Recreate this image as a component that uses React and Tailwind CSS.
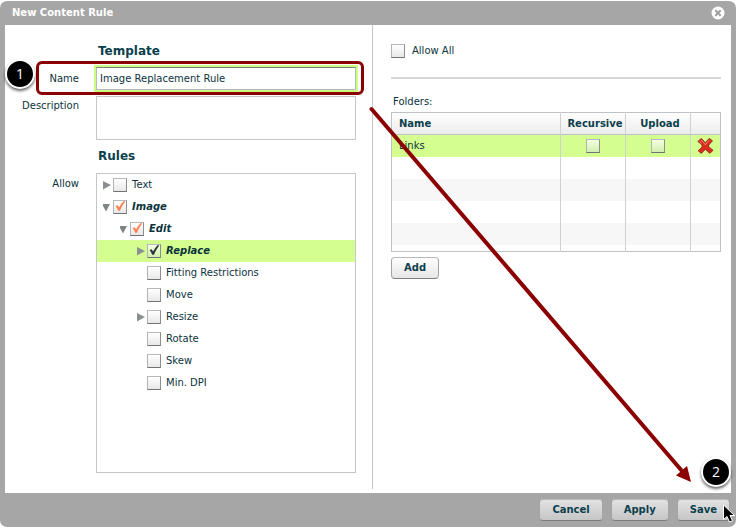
import React, {useState} from "react";

const rules = [
  {name: "Text", pad: "pl-[6px]", arrow: "right"},
  {name: "Image", pad: "pl-[6px]", arrow: "down", checked: true, partial: true},
  {name: "Edit", pad: "pl-[23px]", arrow: "down", checked: true, partial: true},
  {name: "Replace", pad: "pl-[40px]", arrow: "right", checked: true, selected: true},
  {name: "Fitting Restrictions", pad: "pl-[40px]"},
  {name: "Move", pad: "pl-[40px]"},
  {name: "Resize", pad: "pl-[40px]", arrow: "right"},
  {name: "Rotate", pad: "pl-[40px]"},
  {name: "Skew", pad: "pl-[40px]"},
  {name: "Min. DPI", pad: "pl-[40px]"},
];

function Checkbox({partial, selected, ...props}) {
  return (
    <span className="relative block w-[14px] h-[14px] shrink-0">
      <input
        type="checkbox"
        className={
          "peer block w-[14px] h-[14px] appearance-none border border-t-[#b7babc] border-l-[#b0b3b5] border-r-[#8c8f91] border-b-[#6f7375] bg-linear-to-b " +
          (selected ? "from-[#f4ffe2] to-[#d3efac]" : "from-white to-[#e8e8e8]")
        }
        {...props}
      />
      <svg viewBox="0 0 14 14" className="hidden peer-checked:block absolute inset-0 w-[14px] h-[14px] pointer-events-none">
        <path d="M2.6 6 L4.6 5.2 L6.2 7.6 C7.3 5.2 8.9 2.8 10.8 1 L12.2 1.4 C10 4.2 8.3 7.3 7 10.8 L5.2 10.8 C4.5 9 3.7 7.6 2.6 6 Z" fill={partial ? "#ff7f50" : "#2b333c"}/>
      </svg>
    </span>
  );
}

function Arrow({dir}) {
  return (
    <svg viewBox="0 0 10 10" className="block w-[10px] h-[10px] shrink-0">
      {dir === "right" && <path d="M0 1 L8 5 L0 9.5 Z" fill="#8a9092"/>}
      {dir === "down" && <path d="M-1 2 L7 2 L3 9.5 Z" fill="#7f8587"/>}
    </svg>
  );
}

function Button({children, className}) {
  return (
    <button type="button" className={"h-[22px] rounded-[4px] border border-t-[#b7babc] border-x-[#a2a5a7] border-b-[#7b7f81] px-3 font-bold text-[#0b3f4d] bg-linear-to-b " + className}>
      {children}
    </button>
  );
}

function Badge({children, className}) {
  return (
    <div className={"absolute w-[30px] h-[30px] rounded-full border-2 border-white bg-black text-white text-[14px] leading-[26px] text-center font-['Open_Sans',sans-serif] shadow-[0_2px_3px_rgba(0,0,0,0.6)] " + className}>
      {children}
    </div>
  );
}

export default function App() {
  const [name, setName] = useState("Image Replacement Rule");

  return (
    <div className="relative pt-px pr-px pb-px bg-white text-[#0b333c] text-[10px] leading-[14px] font-['DejaVu_Sans',Verdana,sans-serif]">
      <div className="rounded-[7px] bg-[#a6a6a6] px-[5px]">
        <header className="h-6 flex items-center justify-between pl-[7px] pr-[6px]">
          <h1 className="font-bold text-white">New Content Rule</h1>
          <button type="button" aria-label="Close">
            <svg viewBox="0 0 14 14" className="block w-[14px] h-[14px]">
              <circle cx="7" cy="7" r="6.5" fill="#fff"/>
              <path d="M4.3 4.3 L9.7 9.7 M9.7 4.3 L4.3 9.7" stroke="#a0a0a0" strokeWidth="2"/>
            </svg>
          </button>
        </header>

        <main className="grid grid-cols-[368fr_358fr] bg-white pb-1">
          <section className="border-r border-[#c4c7c8] pr-4 pb-4 pt-4">
            <div className="grid grid-cols-[74px_1fr] gap-x-[17px]">
              <h2 className="col-start-2 pl-[2px] text-[12px] leading-5 font-bold text-[#0b3f4d]">Template</h2>

              <label htmlFor="name" className="mt-[11px] text-right">Name</label>
              <input
                id="name"
                value={name}
                onChange={(e) => setName(e.target.value)}
                className="mt-[6px] h-[23px] w-full border border-[#b7babc] border-t-[#7d8082] px-[3px] outline-2 outline-[#cbff7f]"
              />

              <label htmlFor="description" className="mt-[9px] text-right">Description</label>
              <textarea id="description" className="mt-[6px] h-11 w-full resize-none border border-[#c4c7c8] outline-none"/>

              <h2 className="col-start-2 mt-[6px] pl-[2px] text-[12px] leading-5 font-bold text-[#0b3f4d]">Rules</h2>

              <span className="mt-[11px] text-right">Allow</span>
              <ul className="mt-[7px] h-[300px] border border-[#c4c7c8]">
                {rules.map((rule) => (
                  <li key={rule.name} className={"h-[22px] flex items-center " + rule.pad + (rule.selected ? " bg-[#d4fe8f]" : "")}>
                    <Arrow dir={rule.arrow}/>
                    <label className={"flex items-center gap-[5px]" + (rule.checked ? " font-bold italic" : "")}>
                      <Checkbox defaultChecked={rule.checked} partial={rule.partial} selected={rule.selected}/>
                      {rule.name}
                    </label>
                  </li>
                ))}
              </ul>
            </div>
          </section>

          <section className="pl-[18px] pr-[10px] pt-[19px]">
            <label className="flex items-center gap-[7px]">
              <Checkbox/>
              Allow All
            </label>
            <hr className="mt-[19px] border-t-2 border-[#d5d6d7]"/>
            <p className="mt-4 pl-[2px]">Folders:</p>

            <table className="mt-[3px] w-full table-fixed border-collapse border border-[#c0c3c5]">
              <colgroup>
                <col/>
                <col className="w-[65px]"/>
                <col className="w-[65px]"/>
                <col className="w-[30px]"/>
              </colgroup>
              <thead>
                <tr className="h-[22px] bg-linear-to-b from-white to-[#ececec] border-b border-[#c0c3c5] text-[#0b3f4d]">
                  <th className="p-0 pl-[7px] text-left border-r border-[#cfd1d2]">Name</th>
                  <th className="p-0 pl-1 border-r border-[#cfd1d2]">Recursive</th>
                  <th className="p-0 pl-1 border-r border-[#cfd1d2]">Upload</th>
                  <th className="p-0"/>
                </tr>
              </thead>
              <tbody>
                <tr className="h-[22px] bg-[#d4fe8f]">
                  <td className="p-0 pl-[7px] border-r border-[#cfd1d2]">Links</td>
                  <td className="p-0 border-r border-[#cfd1d2]"><div className="flex justify-center"><Checkbox selected aria-label="Recursive"/></div></td>
                  <td className="p-0 border-r border-[#cfd1d2]"><div className="flex justify-center"><Checkbox selected aria-label="Upload"/></div></td>
                  <td className="p-0">
                    <button type="button" aria-label="Delete" className="block mx-auto">
                      <svg viewBox="0 0 18 18" className="block w-[18px] h-[18px]">
                        <path d="M4 1.5 Q6.5 3 8.3 6 Q10 3 12.5 1.5 L15.5 4 Q12.8 6 11.2 9 Q13.3 11.5 16 13.3 L13 16.3 Q10.3 14.5 8.3 12 Q6.5 14.8 4.2 16.3 L1.2 13.8 Q4 11.6 5.5 9 Q3.6 6.2 1 4.5 Z" fill="#dc2b1c" stroke="#98271d" strokeLinejoin="round"/>
                        <path d="M4 3 Q6.4 4.8 8.3 7.8 Q10 4.8 12.5 3 M2.6 4.4 L4.6 6.2" stroke="#f08a78" fill="none"/>
                      </svg>
                    </button>
                  </td>
                </tr>
                {["h-[22px]", "h-[22px] bg-[#f7f7f7]", "h-[22px]", "h-[22px] bg-[#f7f7f7]", "h-[7px]"].map((row, i) => (
                  <tr key={i} className={row}>
                    <td className="p-0 border-r border-[#cfd1d2]"/>
                    <td className="p-0 border-r border-[#cfd1d2]"/>
                    <td className="p-0 border-r border-[#cfd1d2]"/>
                    <td className="p-0"/>
                  </tr>
                ))}
              </tbody>
            </table>
            <Button className="mt-[5px] from-white to-[#e6e6e6]">Add</Button>
          </section>
        </main>

        <footer className="flex justify-end gap-2 pt-[6px] pb-[6px] pr-px">
          <Button className="from-[#e2e2e2] to-[#c6c6c6]">Cancel</Button>
          <Button className="from-[#e2e2e2] to-[#c6c6c6]">Apply</Button>
          <Button className="from-[#e2e2e2] to-[#c6c6c6]">Save</Button>
        </footer>
      </div>

      {/* walkthrough callouts */}
      <div className="absolute left-[36px] top-[61px] w-[328px] h-[34px] rounded-[6px] border-3 border-[#8b0000] pointer-events-none"/>
      <Badge className="left-[5px] top-[59px]">1</Badge>
      <Badge className="left-[701px] top-[457px]">2</Badge>
      <svg width="737" height="528" className="absolute left-0 top-0 pointer-events-none">
        <path d="M371.5 109 L682 471" stroke="#8b0000" strokeWidth="4" strokeLinecap="round"/>
        <path d="M691 482 L676 475.5 L687 466 Z" fill="#8b0000"/>
        <path d="M723.5 505 L723.5 519.5 L727 516.5 L729.5 522 L732.5 520.7 L730 515.5 L734.5 515.5 Z" fill="#000" stroke="#fff" strokeLinejoin="round"/>
      </svg>
    </div>
  );
}
